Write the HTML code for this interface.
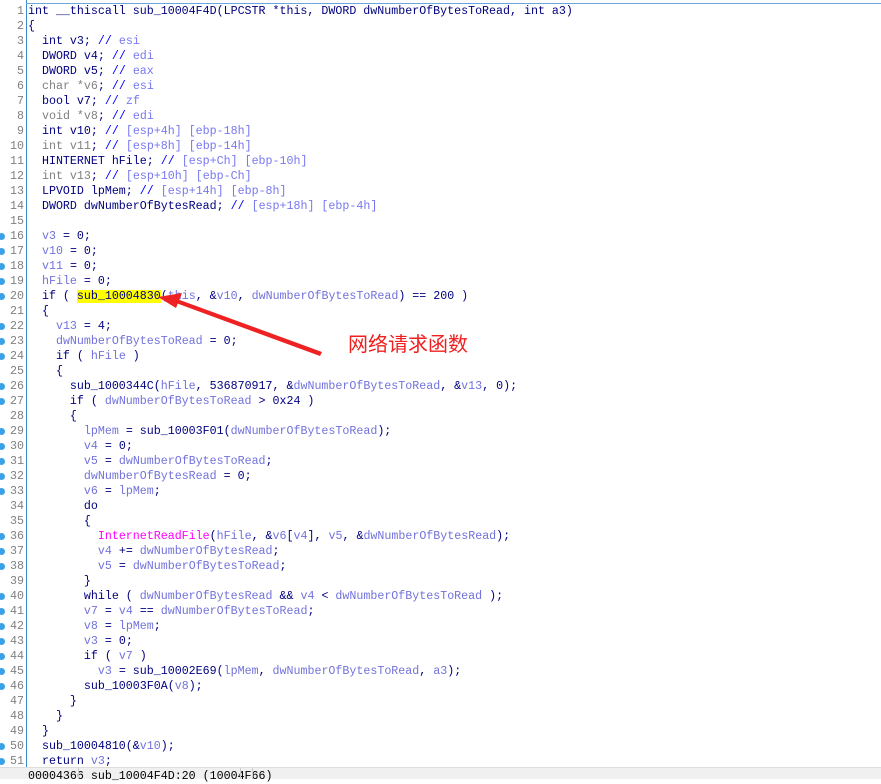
<!DOCTYPE html>
<html><head><meta charset="utf-8"><style>
body{margin:0;width:881px;height:778px;background:#fff;overflow:hidden;position:relative;font-family:"Liberation Mono",monospace;font-size:11.65px;}
.l{position:absolute;left:0;height:15px;line-height:15px;white-space:pre;width:881px}
.n{position:absolute;left:0;width:24px;text-align:right;color:#808080}
.t{position:absolute;left:28px;color:#000080}
.d{position:absolute;left:-2px;top:4px;width:7px;height:7px;border-radius:50%;background:#3aa0e8}
.v{color:#7272dc}.c{color:#0000ff}.ct{color:#7878f0}.g{color:#808080}.f{color:#ff00ff}.h{background:#ffff00}
#gut{position:absolute;left:26px;top:0;width:1px;height:768px;background:#3a8ad0}
#top{position:absolute;left:26px;top:3px;width:855px;height:1px;background:#6aa6e0}
#sb{position:absolute;left:0;top:767px;width:881px;height:11px;background:#f0f0f0;border-top:1px solid #ddd}
#sb span{position:absolute;top:1px;font-size:11.65px;color:#000;line-height:15px}
</style></head><body>
<div id="gut"></div><div id="top"></div>
<div class="l" style="top:4px"><span class="n">1</span><span class="t">int __thiscall sub_10004F4D(LPCSTR *this, DWORD dwNumberOfBytesToRead, int a3)</span></div>
<div class="l" style="top:19px"><span class="n">2</span><span class="t">{</span></div>
<div class="l" style="top:34px"><span class="n">3</span><span class="t">  int v3; <span class="c">//</span> <span class="ct">esi</span></span></div>
<div class="l" style="top:49px"><span class="n">4</span><span class="t">  DWORD v4; <span class="c">//</span> <span class="ct">edi</span></span></div>
<div class="l" style="top:64px"><span class="n">5</span><span class="t">  DWORD v5; <span class="c">//</span> <span class="ct">eax</span></span></div>
<div class="l" style="top:79px"><span class="n">6</span><span class="t">  <span class="g">char *v6</span>; <span class="c">//</span> <span class="ct">esi</span></span></div>
<div class="l" style="top:94px"><span class="n">7</span><span class="t">  bool v7; <span class="c">//</span> <span class="ct">zf</span></span></div>
<div class="l" style="top:109px"><span class="n">8</span><span class="t">  <span class="g">void *v8</span>; <span class="c">//</span> <span class="ct">edi</span></span></div>
<div class="l" style="top:124px"><span class="n">9</span><span class="t">  int v10; <span class="c">//</span> <span class="ct">[esp+4h] [ebp-18h]</span></span></div>
<div class="l" style="top:139px"><span class="n">10</span><span class="t">  <span class="g">int v11</span>; <span class="c">//</span> <span class="ct">[esp+8h] [ebp-14h]</span></span></div>
<div class="l" style="top:154px"><span class="n">11</span><span class="t">  HINTERNET hFile; <span class="c">//</span> <span class="ct">[esp+Ch] [ebp-10h]</span></span></div>
<div class="l" style="top:169px"><span class="n">12</span><span class="t">  <span class="g">int v13</span>; <span class="c">//</span> <span class="ct">[esp+10h] [ebp-Ch]</span></span></div>
<div class="l" style="top:184px"><span class="n">13</span><span class="t">  LPVOID lpMem; <span class="c">//</span> <span class="ct">[esp+14h] [ebp-8h]</span></span></div>
<div class="l" style="top:199px"><span class="n">14</span><span class="t">  DWORD dwNumberOfBytesRead; <span class="c">//</span> <span class="ct">[esp+18h] [ebp-4h]</span></span></div>
<div class="l" style="top:214px"><span class="n">15</span><span class="t"></span></div>
<div class="l" style="top:229px"><span class="d"></span><span class="n">16</span><span class="t">  <span class="v">v3</span> = 0;</span></div>
<div class="l" style="top:244px"><span class="d"></span><span class="n">17</span><span class="t">  <span class="v">v10</span> = 0;</span></div>
<div class="l" style="top:259px"><span class="d"></span><span class="n">18</span><span class="t">  <span class="v">v11</span> = 0;</span></div>
<div class="l" style="top:274px"><span class="d"></span><span class="n">19</span><span class="t">  <span class="v">hFile</span> = 0;</span></div>
<div class="l" style="top:289px"><span class="d"></span><span class="n">20</span><span class="t">  if ( <span class="h">sub_10004830</span>(<span class="v">this</span>, &amp;<span class="v">v10</span>, <span class="v">dwNumberOfBytesToRead</span>) == 200 )</span></div>
<div class="l" style="top:304px"><span class="n">21</span><span class="t">  {</span></div>
<div class="l" style="top:319px"><span class="d"></span><span class="n">22</span><span class="t">    <span class="v">v13</span> = 4;</span></div>
<div class="l" style="top:334px"><span class="d"></span><span class="n">23</span><span class="t">    <span class="v">dwNumberOfBytesToRead</span> = 0;</span></div>
<div class="l" style="top:349px"><span class="d"></span><span class="n">24</span><span class="t">    if ( <span class="v">hFile</span> )</span></div>
<div class="l" style="top:364px"><span class="n">25</span><span class="t">    {</span></div>
<div class="l" style="top:379px"><span class="d"></span><span class="n">26</span><span class="t">      sub_1000344C(<span class="v">hFile</span>, 536870917, &amp;<span class="v">dwNumberOfBytesToRead</span>, &amp;<span class="v">v13</span>, 0);</span></div>
<div class="l" style="top:394px"><span class="d"></span><span class="n">27</span><span class="t">      if ( <span class="v">dwNumberOfBytesToRead</span> &gt; 0x24 )</span></div>
<div class="l" style="top:409px"><span class="n">28</span><span class="t">      {</span></div>
<div class="l" style="top:424px"><span class="d"></span><span class="n">29</span><span class="t">        <span class="v">lpMem</span> = sub_10003F01(<span class="v">dwNumberOfBytesToRead</span>);</span></div>
<div class="l" style="top:439px"><span class="d"></span><span class="n">30</span><span class="t">        <span class="v">v4</span> = 0;</span></div>
<div class="l" style="top:454px"><span class="d"></span><span class="n">31</span><span class="t">        <span class="v">v5</span> = <span class="v">dwNumberOfBytesToRead</span>;</span></div>
<div class="l" style="top:469px"><span class="d"></span><span class="n">32</span><span class="t">        <span class="v">dwNumberOfBytesRead</span> = 0;</span></div>
<div class="l" style="top:484px"><span class="d"></span><span class="n">33</span><span class="t">        <span class="v">v6</span> = <span class="v">lpMem</span>;</span></div>
<div class="l" style="top:499px"><span class="n">34</span><span class="t">        do</span></div>
<div class="l" style="top:514px"><span class="n">35</span><span class="t">        {</span></div>
<div class="l" style="top:529px"><span class="d"></span><span class="n">36</span><span class="t">          <span class="f">InternetReadFile</span>(<span class="v">hFile</span>, &amp;<span class="v">v6</span>[<span class="v">v4</span>], <span class="v">v5</span>, &amp;<span class="v">dwNumberOfBytesRead</span>);</span></div>
<div class="l" style="top:544px"><span class="d"></span><span class="n">37</span><span class="t">          <span class="v">v4</span> += <span class="v">dwNumberOfBytesRead</span>;</span></div>
<div class="l" style="top:559px"><span class="d"></span><span class="n">38</span><span class="t">          <span class="v">v5</span> = <span class="v">dwNumberOfBytesToRead</span>;</span></div>
<div class="l" style="top:574px"><span class="n">39</span><span class="t">        }</span></div>
<div class="l" style="top:589px"><span class="d"></span><span class="n">40</span><span class="t">        while ( <span class="v">dwNumberOfBytesRead</span> &amp;&amp; <span class="v">v4</span> &lt; <span class="v">dwNumberOfBytesToRead</span> );</span></div>
<div class="l" style="top:604px"><span class="d"></span><span class="n">41</span><span class="t">        <span class="v">v7</span> = <span class="v">v4</span> == <span class="v">dwNumberOfBytesToRead</span>;</span></div>
<div class="l" style="top:619px"><span class="d"></span><span class="n">42</span><span class="t">        <span class="v">v8</span> = <span class="v">lpMem</span>;</span></div>
<div class="l" style="top:634px"><span class="d"></span><span class="n">43</span><span class="t">        <span class="v">v3</span> = 0;</span></div>
<div class="l" style="top:649px"><span class="d"></span><span class="n">44</span><span class="t">        if ( <span class="v">v7</span> )</span></div>
<div class="l" style="top:664px"><span class="d"></span><span class="n">45</span><span class="t">          <span class="v">v3</span> = sub_10002E69(<span class="v">lpMem</span>, <span class="v">dwNumberOfBytesToRead</span>, <span class="v">a3</span>);</span></div>
<div class="l" style="top:679px"><span class="d"></span><span class="n">46</span><span class="t">        sub_10003F0A(<span class="v">v8</span>);</span></div>
<div class="l" style="top:694px"><span class="n">47</span><span class="t">      }</span></div>
<div class="l" style="top:709px"><span class="n">48</span><span class="t">    }</span></div>
<div class="l" style="top:724px"><span class="n">49</span><span class="t">  }</span></div>
<div class="l" style="top:739px"><span class="d"></span><span class="n">50</span><span class="t">  sub_10004810(&amp;<span class="v">v10</span>);</span></div>
<div class="l" style="top:754px"><span class="d"></span><span class="n">51</span><span class="t">  return <span class="v">v3</span>;</span></div>
<svg style="position:absolute;left:0;top:0" width="881" height="778">
<polygon points="320,356 176,303 177,299 322,352" fill="#ee2222"/>
<polygon points="158,297 182,293 176,308" fill="#ee2222"/>
</svg>
<div style="position:absolute;left:348px;top:330px;font-family:'Noto Sans CJK SC',sans-serif;font-size:20px;color:#f02020;line-height:26px">网络请求函数</div>
<div id="sb"><span style="left:28px">00004366 sub_10004F4D:20 (10004F66)</span><span style="left:78px;top:0;width:1px;height:11px;background:#ccc"></span><span style="left:240px;top:0;width:1px;height:11px;background:#ccc"></span><span style="left:252px;top:0;width:1px;height:11px;background:#ccc"></span></div>
</body></html>
